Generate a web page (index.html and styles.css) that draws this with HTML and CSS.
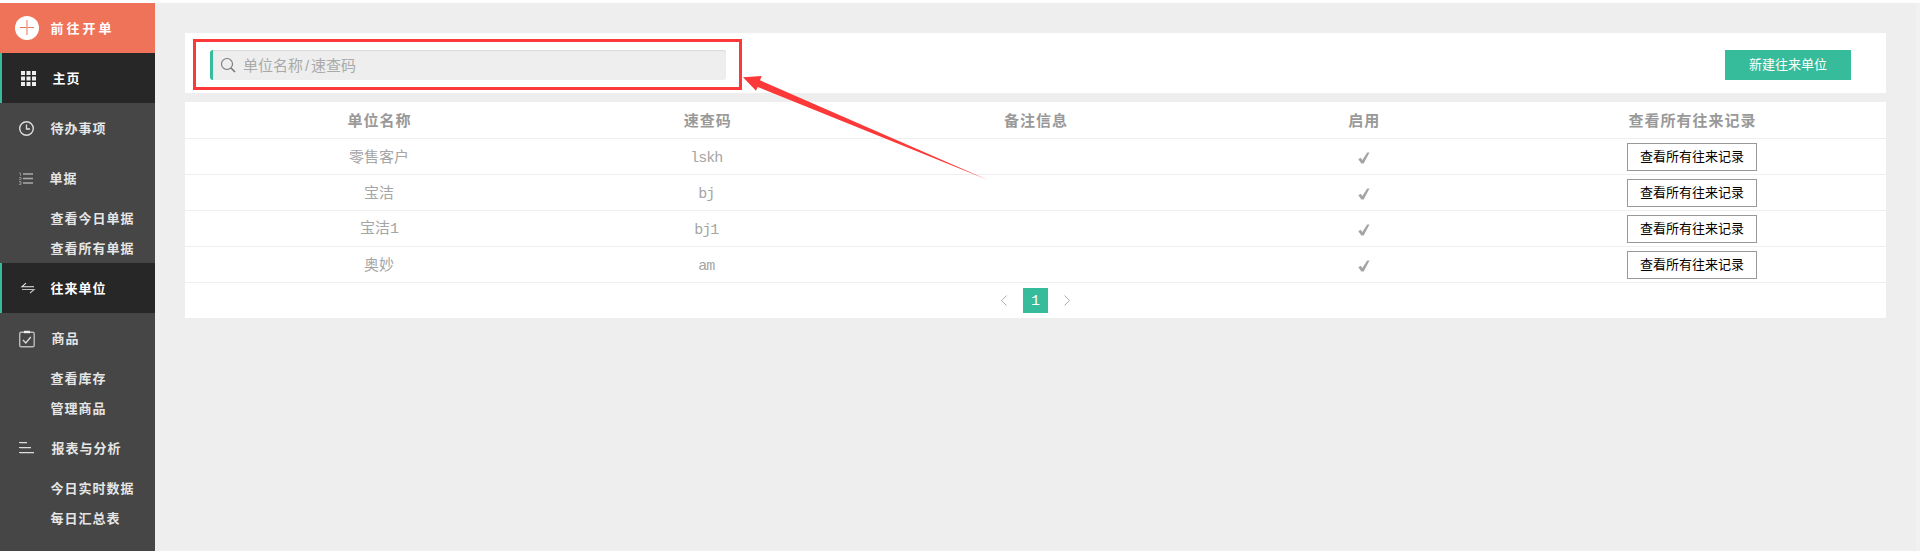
FILE: index.html
```
<!DOCTYPE html>
<html lang="zh-CN">
<head>
<meta charset="utf-8">
<title>往来单位</title>
<link rel="stylesheet" href="styles.css">
</head>
<body>
<div class="app">
  <nav class="sidebar">
    <a class="item create"><svg class="icon" viewBox="0 0 50 50"><circle cx="27" cy="25" r="12" fill="#fff"/><path d="M20 24.5h14" stroke="#ee7359"/><path d="M27 17v15" stroke="#f3a896" stroke-width="1.6"/></svg><span>前往开单</span></a>
    <a class="item active home"><svg class="icon" viewBox="0 0 50 50"><path fill="#eee" d="M21 18h4v4h-4zM26.500 18h4v4h-4zM32 18h4v4h-4zM21 23.500h4v4h-4zM26.500 23.500h4v4h-4zM32 23.500h4v4h-4zM21 29h4v4h-4zM26.500 29h4v4h-4zM32 29h4v4h-4z"/></svg><span>主页</span></a>
    <a class="item"><svg class="icon" viewBox="0 0 50 50"><circle cx="26.500" cy="25.500" r="6.800" fill="none" stroke="#ddd" stroke-width="1.400"/><path d="M26.500 21.500v4.500h3.500" fill="none" stroke="#ddd" stroke-width="1.300"/></svg><span>待办事项</span></a>
    <a class="item bills"><svg class="icon" viewBox="0 0 50 50"><path d="M23 21h10M23 25.500h10M23 30h10" stroke="#aaa" stroke-width="1.600"/><path d="M19 20h1.500v3M19 24.500h2v2h-2M19 28.500h2v3h-2M19.500 30h1.500" stroke="#999" stroke-width=".8" fill="none"/></svg><span>单据</span></a>
    <a class="sub">查看今日单据</a>
    <a class="sub">查看所有单据</a>
    <a class="item active"><svg class="icon" viewBox="0 0 50 50"><path d="M34 23.700H22l4-3.500" stroke="#eee" fill="none" stroke-width="1.100"/><path d="M22 26.500h12l-4 3.500" stroke="#bbb" fill="none" stroke-width="1.200"/></svg><span>往来单位</span></a>
    <a class="item goods"><svg class="icon" viewBox="0 0 50 50"><rect x="19.700" y="19.200" width="14.500" height="14.500" rx="1.500" fill="none" stroke="#bbb" stroke-width="1.400"/><path d="M24 19h6" stroke="#eee" stroke-width="2.400"/><path d="M23 27l2.800 3 5-6" stroke="#ddd" fill="none" stroke-width="1.300"/></svg><span>商品</span></a>
    <a class="sub">查看库存</a>
    <a class="sub">管理商品</a>
    <a class="item goods"><svg class="icon" viewBox="0 0 50 50"><path d="M19 19.500h8M19 24.500h12M19 29.500h15" stroke="#ddd"/><path d="M20 20.500h7M20 25.500h11M20 30.500h14" stroke="#777" stroke-width=".8"/></svg><span>报表与分析</span></a>
    <a class="sub">今日实时数据</a>
    <a class="sub">每日汇总表</a>
  </nav>
  <main class="main">
    <section class="toolbar">
      <div class="search">
        <svg class="search-icon" viewBox="0 0 16 16"><circle cx="7" cy="7" r="5.500" fill="none" stroke="#777" stroke-width="1.100"/><path d="M11 11l4 4" stroke="#777" stroke-width="1.600"/></svg>
        <span>单位名称<span class="slash">/</span>速查码</span>
      </div>
      <button class="new">新建往来单位</button>
    </section>
    <section class="table">
      <div class="row head"><div>单位名称</div><div>速查码</div><div>备注信息</div><div>启用</div><div>查看所有往来记录</div></div>
      <div class="row"><div>零售客户</div><div class="code">lskh</div><div></div><div><svg class="check" viewBox="0 0 12 12"><path d="M.3 7.200L2.600 5.700 4.300 8 9.200.5h2.300L5.700 11.500H3.300z"/></svg></div><div><button class="view">查看所有往来记录</button></div></div>
      <div class="row"><div>宝洁</div><div class="code">bj</div><div></div><div><svg class="check" viewBox="0 0 12 12"><path d="M.3 7.200L2.600 5.700 4.300 8 9.200.5h2.300L5.700 11.500H3.300z"/></svg></div><div><button class="view">查看所有往来记录</button></div></div>
      <div class="row"><div>宝洁<span class="digit">1</span></div><div class="code">bj1</div><div></div><div><svg class="check" viewBox="0 0 12 12"><path d="M.3 7.200L2.600 5.700 4.300 8 9.200.5h2.300L5.700 11.500H3.300z"/></svg></div><div><button class="view">查看所有往来记录</button></div></div>
      <div class="row"><div>奥妙</div><div class="code">am</div><div></div><div><svg class="check" viewBox="0 0 12 12"><path d="M.3 7.200L2.600 5.700 4.300 8 9.200.5h2.300L5.700 11.500H3.300z"/></svg></div><div><button class="view">查看所有往来记录</button></div></div>
      <div class="pager">
        <svg class="chev" viewBox="0 0 6 11"><path d="M5.500.5l-5 5 5 5"/></svg>
        <span class="page">1</span>
        <svg class="chev" viewBox="0 0 6 11"><path d="M.5.5l5 5-5 5"/></svg>
      </div>
    </section>
  </main>
  <div class="gutter"></div>
</div>
<svg class="callout" viewBox="0 0 800 150"><rect x="4.500" y="5.500" width="546" height="48" fill="none" stroke="#fd3838" stroke-width="3"/><path fill="#fd3838" d="M553 42.300L571.700 41 570 45.300 798 145 567.700 52 566 55.700z"/></svg>
</body>
</html>
```
FILE: styles.css
```
* { box-sizing: border-box; }
body {
  margin: 0;
  height: 551px;
  overflow: hidden;
  background: #fff;
  font-family: "Liberation Sans", "Noto Sans CJK SC", sans-serif;
}
.app { display: flex; height: 551px; padding-top: 3px; }
.sidebar {
  width: 155px;
  flex: none;
  display: flex;
  flex-direction: column;
  background: #464646;
  color: #e5e5e5;
  font-size: 13px;
  font-weight: 700;
  letter-spacing: 1px;
  white-space: nowrap;
}
.item { display: flex; align-items: center; height: 50px; padding-right: 10px; }
.item span { padding-bottom: 2px; }
.icon { width: 50px; height: 50px; flex: none; margin-right: .5px; }
.create { background: #ee7359; color: #fff; letter-spacing: 3px; }
.active { background: #272727; color: #fff; box-shadow: inset 2px 0 #36bb9b; }
.home .icon { margin-right: 2.5px; }
.bills .icon { margin-right: -.5px; }
.goods .icon { margin-right: 1.5px; }
.sub { height: 30px; line-height: 31px; padding-left: 50.5px; }
.main { flex: 1; background: #eee; padding: 30px 30px 0; }
.gutter { width: 4px; background: #f1f1f1; }
.toolbar {
  height: 60px;
  padding: 8px 35px 4px 25px;
  display: flex;
  align-items: center;
  justify-content: space-between;
  background: #fff;
  margin-bottom: 9px;
}
.search {
  width: 516px;
  height: 30px;
  display: flex;
  align-items: center;
  background: #eee;
  border-left: 3px solid #36bb9b;
  border-radius: 3px;
  box-shadow: inset 0 1px 1px #d9d9d9;
  color: #a9a9a9;
  font-size: 15px;
  padding-left: 7px;
}
.search > span { padding-bottom: 1px; }
.slash { display: inline-block; width: 8px; text-align: center; }
.search-icon { width: 16px; height: 16px; margin-right: 7px; }
button { font-family: inherit; font-size: 13px; padding: 0; line-height: 18px; }
.new { width: 126px; height: 30px; border: 0; background: #36bb9b; color: #fff; }
.table { height: 216px; background: #fff; color: #a5a5a5; font-size: 15px; }
.row {
  display: grid;
  grid-template-columns: repeat(5, 1fr);
  align-items: center;
  text-align: center;
  height: 36px;
  padding: 0 30px;
  border-bottom: 1px solid #eee;
  line-height: 22px;
}
.head { height: 37px; color: #999; font-weight: 700; letter-spacing: 1px; }
.head div { padding: 1px 0 0 1px; }
.code, .digit { font-family: "Liberation Mono", monospace; letter-spacing: -1px; }
.code { padding: 4px 2px 0 0; }
.check { display: block; width: 12px; height: 12px; margin: 2px auto 0; fill: #a5a5a5; }
.view { display: block; width: 130px; height: 28px; margin: 1px auto 0; border: 1px solid #999; background: #fff; color: #000; }
.pager { height: 35px; display: flex; align-items: center; justify-content: center; gap: 16px; }
.page { width: 25px; height: 25px; line-height: 27px; text-align: center; color: #fff; background: #36bb9b; font-family: "Liberation Mono", monospace; }
.chev { width: 6px; height: 11px; fill: none; stroke: #a5a5a5; stroke-width: .9; }
.callout { position: absolute; left: 190px; top: 35px; width: 800px; height: 150px; pointer-events: none; }
```
